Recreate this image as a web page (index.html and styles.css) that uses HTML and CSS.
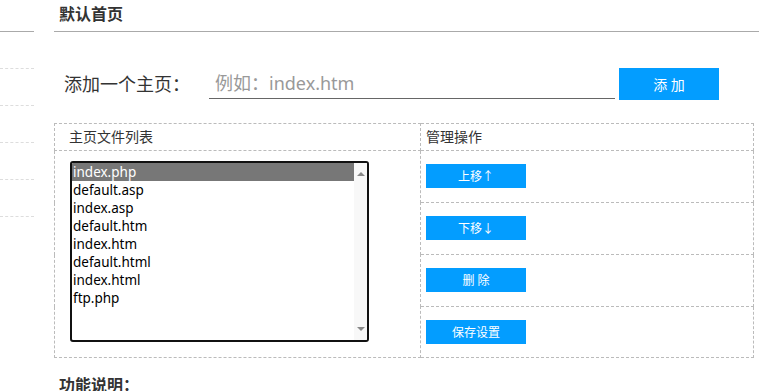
FILE: index.html
```html
<!DOCTYPE html>
<html lang="zh-CN">
<head>
    <meta charset="UTF-8">
    <meta name="viewport" content="width=device-width, initial-scale=1.0">
    <title>默认首页</title>
    <link rel="stylesheet" href="styles.css">
</head>
<body>
    <div class="page">
        <aside class="side">
            <div class="side-head"></div>
            <div class="side-item"></div>
            <div class="side-item"></div>
            <div class="side-item"></div>
            <div class="side-item"></div>
            <div class="side-item"></div>
        </aside>
        <main class="main">
            <h2 class="title">默认首页</h2>
            <div class="content">
                <div class="add-row">
                    <label class="add-label" for="home-file">添加一个主页：</label>
                    <input class="add-input" id="home-file" type="text" placeholder="例如：index.htm">
                    <button class="btn btn-add">添 加</button>
                </div>
                <table class="home-table">
                    <colgroup>
                        <col class="col-list">
                        <col>
                    </colgroup>
                    <tr>
                        <th class="head-list">主页文件列表</th>
                        <th class="head-ops">管理操作</th>
                    </tr>
                    <tr>
                        <td class="list-cell" rowspan="4">
                            <div class="listbox">
                                <ul class="list-items">
                                    <li class="selected">index.php</li>
                                    <li>default.asp</li>
                                    <li>index.asp</li>
                                    <li>default.htm</li>
                                    <li>index.htm</li>
                                    <li>default.html</li>
                                    <li>index.html</li>
                                    <li>ftp.php</li>
                                </ul>
                                <div class="scrollbar">
                                    <span class="arrow-up"></span>
                                    <span class="arrow-down"></span>
                                </div>
                            </div>
                        </td>
                        <td class="op-cell"><button class="btn btn-op">上移↑</button></td>
                    </tr>
                    <tr>
                        <td class="op-cell"><button class="btn btn-op">下移↓</button></td>
                    </tr>
                    <tr>
                        <td class="op-cell"><button class="btn btn-op">删 除</button></td>
                    </tr>
                    <tr>
                        <td class="op-cell op-last"><button class="btn btn-op">保存设置</button></td>
                    </tr>
                </table>
                <h3 class="note-title">功能说明：</h3>
            </div>
        </main>
    </div>
</body>
</html>
```

FILE: styles.css
```css
body {
    margin: 0;
    font: 14px / 1.5 "Noto Sans", "Noto Sans CJK SC", sans-serif;
    color: #333;
    background-color: #fff;
    overflow: hidden;
}
.page {
    display: flex;
    gap: 20px;
}
.side {
    width: 34px;
    flex-shrink: 0;
}
.side-head {
    height: 31px;
    border-bottom: 1px solid #aaa;
}
.side-item {
    height: 36px;
    border-bottom: 1px dashed #ddd;
}
.main {
    flex: 1;
}
.title {
    margin: 0;
    height: 31px;
    line-height: 29px;
    padding-left: 5px;
    font-size: 16px;
    font-weight: bold;
    color: #333;
    border-bottom: 1px solid #aaa;
}
.content {
    padding-right: 6px;
}
.add-row {
    display: flex;
    align-items: center;
    margin-top: 36px;
    height: 32px;
}
.add-label {
    font-size: 18px;
    color: #333;
    padding-left: 10px;
    width: 145px;
}
.add-input {
    width: 406px;
    height: 31px;
    box-sizing: border-box;
    margin: 0 4px 1px 0;
    padding: 0 6px;
    border: none;
    border-bottom: 1px solid #666;
    outline: none;
    font: 18px "Noto Sans", "Noto Sans CJK SC", sans-serif;
    color: #333;
    align-self: flex-end;
}
.add-input::placeholder {
    color: #999;
}
.btn {
    border: none;
    background-color: #039dff;
    color: #fff;
    font-family: inherit;
    padding: 0;
    cursor: pointer;
}
.btn-add {
    width: 100px;
    height: 32px;
    font-size: 14px;
}
.home-table {
    margin-top: 23px;
    width: 700px;
    table-layout: fixed;
    border-collapse: collapse;
    border: 1px dashed #bbb;
}
.col-list {
    width: 366px;
}
.home-table th,
.home-table td {
    border: 1px dashed #bbb;
    padding: 0;
    text-align: left;
}
.home-table th {
    height: 26px;
    line-height: 26px;
    font-weight: normal;
    font-size: 14px;
    color: #333;
}
.head-list {
    padding-left: 14px !important;
}
.head-ops {
    padding-left: 5px !important;
}
.list-cell {
    vertical-align: top;
    padding: 10px 0 0 15px !important;
}
.listbox {
    width: 299px;
    height: 181px;
    box-sizing: border-box;
    border: 2px solid #111;
    border-radius: 3px;
    display: flex;
    overflow: hidden;
}
.list-items {
    flex: 1;
    list-style: none;
    margin: 0;
    padding: 0;
    font-size: 13.5px;
    line-height: 18px;
    color: #000;
}
.list-items li {
    padding-left: 1px;
    height: 18px;
}
.list-items .selected {
    background-color: #777;
    color: #fff;
}
.scrollbar {
    width: 13px;
    background-color: #f8f8f8;
    display: flex;
    flex-direction: column;
    justify-content: space-between;
    align-items: center;
    padding: 9px 0;
}
.arrow-up,
.arrow-down {
    width: 0;
    height: 0;
    border-left: 4px solid transparent;
    border-right: 4px solid transparent;
}
.arrow-up {
    border-bottom: 4px solid #888;
}
.arrow-down {
    border-top: 4px solid #888;
}
.op-cell {
    padding: 13px 5px 14px !important;
    height: 24px;
    vertical-align: top;
}
.op-last {
    padding-bottom: 13px !important;
}
.btn-op {
    display: block;
    width: 100px;
    height: 24px;
    font-size: 12px;
}
.note-title {
    margin: 15px 0 0 5px;
    font-size: 16px;
    font-weight: bold;
    line-height: 24px;
    color: #333;
}
```
